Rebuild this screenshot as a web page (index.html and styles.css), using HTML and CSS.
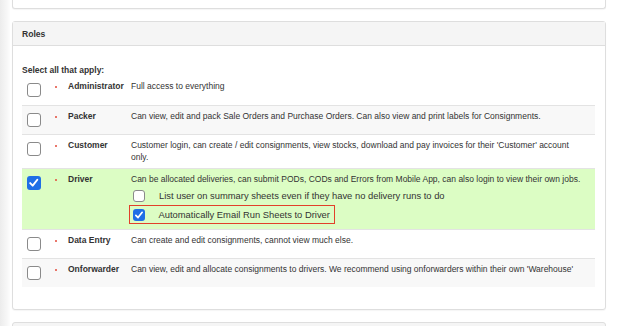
FILE: index.html
```html
<!DOCTYPE html>
<html>
<head>
<meta charset="utf-8">
<link rel="stylesheet" href="styles.css">
</head>
<body>
<div class="page">
  <div class="shade"></div>
  <div class="main">
    <div class="panel panel-top"></div>
    <div class="panel roles">
      <div class="panel-head">Roles</div>
      <div class="panel-body">
        <div class="lead">Select all that apply:</div>
        <div class="rows">
          <div class="row first">
            <div class="c-check"><span class="cb"></span></div>
            <div class="c-dot"><span class="dot"></span></div>
            <div class="c-name">Administrator</div>
            <div class="c-desc">Full access to everything</div>
          </div>
          <div class="row striped">
            <div class="c-check"><span class="cb"></span></div>
            <div class="c-dot"><span class="dot"></span></div>
            <div class="c-name">Packer</div>
            <div class="c-desc">Can view, edit and pack Sale Orders and Purchase Orders. Can also view and print labels for Consignments.</div>
          </div>
          <div class="row">
            <div class="c-check"><span class="cb"></span></div>
            <div class="c-dot"><span class="dot"></span></div>
            <div class="c-name">Customer</div>
            <div class="c-desc">Customer login, can create / edit consignments, view stocks, download and pay invoices for their 'Customer' account only.</div>
          </div>
          <div class="row active">
            <div class="c-check"><span class="cb on"><svg viewBox="0 0 14 14"><path d="M3.3 7.4 L5.9 10 L10.7 3.9" fill="none" stroke="#fff" stroke-width="2" stroke-linecap="round" stroke-linejoin="round"/></svg></span></div>
            <div class="c-dot"><span class="dot"></span></div>
            <div class="c-name">Driver</div>
            <div class="c-desc">
              <div>Can be allocated deliveries, can submit PODs, CODs and Errors from Mobile App, can also login to view their own jobs.</div>
              <div class="sub first-sub">
                <span class="cb"></span>
                <span class="sub-label">List user on summary sheets even if they have no delivery runs to do</span>
              </div>
              <div class="sub highlight">
                <span class="cb on"><svg viewBox="0 0 14 14"><path d="M3.3 7.4 L5.9 10 L10.7 3.9" fill="none" stroke="#fff" stroke-width="2" stroke-linecap="round" stroke-linejoin="round"/></svg></span>
                <span class="sub-label">Automatically Email Run Sheets to Driver</span>
              </div>
            </div>
          </div>
          <div class="row">
            <div class="c-check"><span class="cb"></span></div>
            <div class="c-dot"><span class="dot"></span></div>
            <div class="c-name">Data Entry</div>
            <div class="c-desc">Can create and edit consignments, cannot view much else.</div>
          </div>
          <div class="row striped">
            <div class="c-check"><span class="cb"></span></div>
            <div class="c-dot"><span class="dot"></span></div>
            <div class="c-name">Onforwarder</div>
            <div class="c-desc">Can view, edit and allocate consignments to drivers. We recommend using onforwarders within their own 'Warehouse'</div>
          </div>
        </div>
      </div>
    </div>
    <div class="panel panel-next"></div>
  </div>
</div>
</body>
</html>
```
FILE: styles.css
```css
html, body {
  margin: 0;
  padding: 0;
  background: #fff;
}
body {
  font-family: "Liberation Sans", Arial, Helvetica, sans-serif;
  color: #333;
  font-size: 8.5px;
  overflow: hidden;
  width: 617px;
  height: 326px;
}
.page {
  display: flex;
  height: 326px;
  overflow: hidden;
}
.shade {
  width: 10px;
  flex: none;
  background: linear-gradient(to right, #ececec, #f7f7f7 70%, #fdfdfd);
}
.main {
  flex: none;
  width: 594px;
  margin-left: 2px;
  display: flex;
  flex-direction: column;
}
.panel {
  flex: none;
  border: 1px solid #dedede;
  border-radius: 3px;
  background: #fff;
  box-shadow: 0 1px 1px rgba(0,0,0,0.04);
}
.panel-top {
  height: 18px;
  margin-top: -9px;
  box-sizing: border-box;
  border-top: none;
  border-radius: 0 0 3px 3px;
}
.roles {
  margin-top: 12px;
  height: 289px;
  box-sizing: border-box;
}
.panel-head {
  background: #f5f5f5;
  border-bottom: 1px solid #dedede;
  height: 24px;
  box-sizing: border-box;
  padding: 7px 9px 0;
  font-weight: bold;
  font-size: 8.6px;
  color: #333;
}
.panel-body {
  padding: 18px 9px 0 9px;
}
.lead {
  font-weight: bold;
  font-size: 8.5px;
  line-height: 12px;
  margin-bottom: 2px;
}
.rows {
  width: 573px;
}
.row {
  display: flex;
  border-top: 1px solid #e3e3e3;
  padding: 4px 0 5px;
  min-height: 19px;
  line-height: 12px;
}
.row.first {
  border-top: none;
  padding-top: 2px;
  min-height: 20px;
}
.row.striped {
  background: #f8f8f8;
}
.row.active {
  background: #dcfdc4;
  padding-bottom: 5px;
}
.c-check {
  width: 33px;
  flex: none;
  padding: 3px 0 0 5px;
  box-sizing: border-box;
}
.c-dot {
  width: 13px;
  flex: none;
}
.dot {
  display: block;
  width: 2px;
  height: 2px;
  border-radius: 1px;
  background: #e34a3a;
  margin: 6px 0 0 0;
}
.c-name {
  width: 63px;
  flex: none;
  font-weight: bold;
}
.c-desc {
  flex: 1;
  padding-right: 8px;
}
.cb {
  display: inline-flex;
  width: 13.5px;
  height: 13.5px;
  box-sizing: border-box;
  border: 1px solid #8a8a8a;
  border-radius: 3px;
  background: #fff;
  vertical-align: middle;
}
.cb.on {
  border: none;
  background: #1f6fe6;
}
.cb svg {
  width: 13.5px;
  height: 13.5px;
  display: block;
}
.sub {
  display: flex;
  align-items: center;
  height: 19px;
  white-space: nowrap;
  padding-left: 2px;
}
.first-sub {
  margin-top: 1px;
}
.sub .cb {
  width: 12px;
  height: 12px;
  flex: none;
}
.sub .cb svg {
  width: 12px;
  height: 12px;
}
.sub-label {
  margin-left: 14px;
  font-size: 9.4px;
}
.highlight {
  display: inline-flex;
  border: 1.5px solid #e2402a;
  margin-left: -2px;
  padding-left: 2.5px;
  padding-right: 4px;
  height: 19px;
  box-sizing: border-box;
}
.panel-next {
  margin-top: 12px;
  height: 30px;
  background: #f5f5f5;
}
```
